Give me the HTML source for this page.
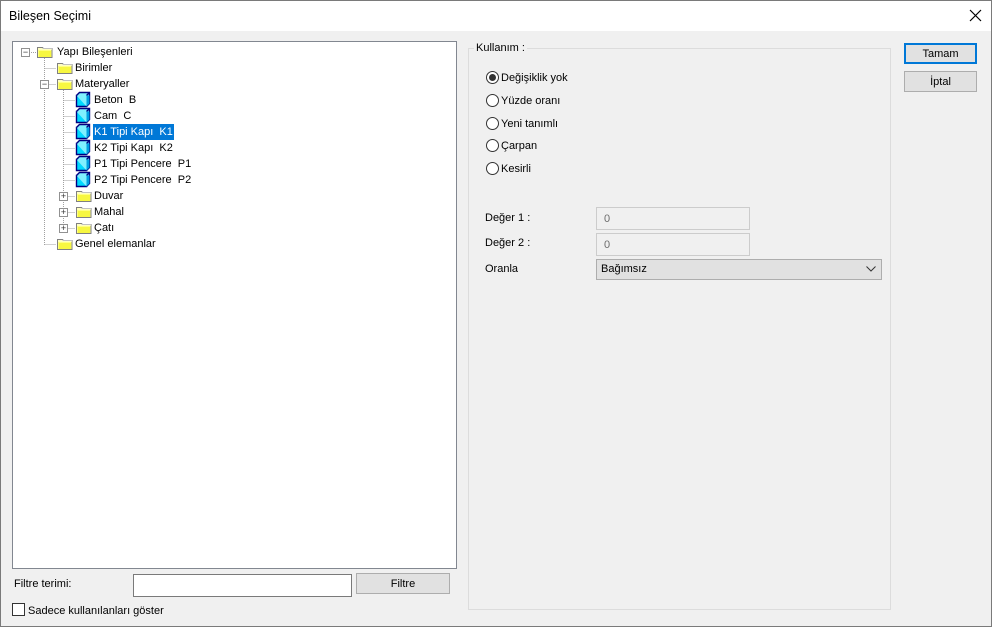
<!DOCTYPE html>
<html><head><meta charset="utf-8"><style>
*{margin:0;padding:0;box-sizing:border-box}
body{width:992px;height:627px;background:#f0f0f0;font-family:"Liberation Sans",sans-serif;font-size:11px;line-height:19px;color:#000;position:relative;overflow:hidden}
.a{position:absolute;white-space:nowrap}
#win{position:absolute;left:0;top:0;width:992px;height:627px;border:1px solid #7a7a7a}
#title{position:absolute;left:0;top:0;width:992px;height:31px;background:#fff}
.tree{position:absolute;left:12px;top:41px;width:445px;height:528px;background:#fff;border:1px solid #828790}
.tb{position:absolute;width:9px;height:9px;border:1px solid #919191;background:#fff;font-size:9px;line-height:7px;text-align:center;color:#333}
.btn{position:absolute;background:#e1e1e1;border:1px solid #adadad;text-align:center;line-height:21px}
.inp{position:absolute;background:#fff;border:1px solid #7a7a7a}
.rad{position:absolute;width:13px;height:13px;border:1px solid #333;border-radius:50%;background:#fff}
</style></head><body>
<div id="title"></div>
<div id="win"></div>
<div class="a" style="left:9px;top:8px;font-size:12.5px;line-height:16px">Bileşen Seçimi</div>
<svg class="a" style="left:969px;top:9px" width="13" height="13"><path d="M1 1L12 12M12 1L1 12" stroke="#000" stroke-width="1.2"/></svg>

<div class="tree">
<svg class="a" style="left:0;top:0" width="445" height="528">
<g stroke="#a0a0a0" stroke-dasharray="1 1" fill="none">
<path d="M31.5 16v187M31.5 26.5h12M31.5 42.5h12M31.5 202.5h12M50.5 48v139M50.5 58.5h12M50.5 74.5h12M50.5 90.5h12M50.5 106.5h12M50.5 122.5h12M50.5 138.5h12M50.5 154.5h12M50.5 170.5h12M50.5 186.5h12M18 10.5h6"/>
</g>
<defs>
<g id="f"><path d="M0.5 2.5h5l1 1h8.5v9h-14.5z" fill="#ffff80" stroke="#808080"/><path d="M1 4h14" stroke="#fff"/><path d="M2 6h12v6h-12z" fill="#f0f000" opacity=".5"/></g>
<g id="c"><path d="M1.5 3.5h10v11h-10z" fill="#00d8ff" stroke="#000080" stroke-width="1.4"/><path d="M1.5 3.5l3-3h10v11l-3 3M11.5 3.5l3-3" fill="#80f0ff" stroke="#000080" stroke-width="1.4"/><path d="M11.5 3.5h3v8l-3 3z" fill="#00a0e0"/></g>
</defs>
<use href="#f" x="24" y="3"/>
<use href="#f" x="44" y="19"/>
<use href="#f" x="44" y="35"/>
<use href="#c" x="62" y="50"/><use href="#c" x="62" y="66"/><use href="#c" x="62" y="82"/><use href="#c" x="62" y="98"/><use href="#c" x="62" y="114"/><use href="#c" x="62" y="130"/>
<use href="#f" x="63" y="147"/><use href="#f" x="63" y="163"/><use href="#f" x="63" y="179"/>
<use href="#f" x="44" y="195"/>
</svg>
<div class="tb" style="left:8px;top:6px">−</div>
<div class="tb" style="left:27px;top:38px">−</div>
<div class="tb" style="left:46px;top:150px">+</div>
<div class="tb" style="left:46px;top:166px">+</div>
<div class="tb" style="left:46px;top:182px">+</div>
<div class="a" style="left:44px;top:1px">Yapı Bileşenleri</div>
<div class="a" style="left:62px;top:17px">Birimler</div>
<div class="a" style="left:62px;top:33px">Materyaller</div>
<div class="a" style="left:81px;top:49px">Beton&nbsp; B</div>
<div class="a" style="left:81px;top:65px">Cam&nbsp; C</div>
<div class="a" style="left:80px;top:82px;background:#0078d7;color:#fff;padding:0 1px;height:16px;line-height:17px">K1 Tipi Kapı&nbsp; K1</div>
<div class="a" style="left:81px;top:97px">K2 Tipi Kapı&nbsp; K2</div>
<div class="a" style="left:81px;top:113px">P1 Tipi Pencere&nbsp; P1</div>
<div class="a" style="left:81px;top:129px">P2 Tipi Pencere&nbsp; P2</div>
<div class="a" style="left:81px;top:145px">Duvar</div>
<div class="a" style="left:81px;top:161px">Mahal</div>
<div class="a" style="left:81px;top:177px">Çatı</div>
<div class="a" style="left:62px;top:193px">Genel elemanlar</div>
</div>

<div class="a" style="left:14px;top:575px">Filtre terimi:</div>
<div class="inp" style="left:133px;top:574px;width:219px;height:23px"></div>
<div class="btn" style="left:356px;top:573px;width:94px;height:21px;line-height:20px">Filtre</div>
<div class="a" style="left:12px;top:603px;width:13px;height:13px;border:1px solid #333;background:#fff"></div>
<div class="a" style="left:28px;top:602px">Sadece kullanılanları göster</div>

<div class="a" style="left:468px;top:48px;width:423px;height:562px;border:1px solid #dcdcdc"></div>
<div class="a" style="left:474px;top:39px;background:#f0f0f0;padding:0 2px">Kullanım :</div>
<div class="rad" style="left:486px;top:71px"><div style="position:absolute;left:2px;top:2px;width:7px;height:7px;border-radius:50%;background:#333"></div></div>
<div class="rad" style="left:486px;top:94px"></div>
<div class="rad" style="left:486px;top:117px"></div>
<div class="rad" style="left:486px;top:139px"></div>
<div class="rad" style="left:486px;top:162px"></div>
<div class="a" style="left:501px;top:69px">Değişiklik yok</div>
<div class="a" style="left:501px;top:92px">Yüzde oranı</div>
<div class="a" style="left:501px;top:115px">Yeni tanımlı</div>
<div class="a" style="left:501px;top:137px">Çarpan</div>
<div class="a" style="left:501px;top:160px">Kesirli</div>
<div class="a" style="left:485px;top:209px">Değer 1 :</div>
<div class="a" style="left:485px;top:234px">Değer 2 :</div>
<div class="a" style="left:485px;top:260px">Oranla</div>
<div class="a" style="left:596px;top:207px;width:154px;height:23px;border:1px solid #ccc;padding:2px 0 0 7px;color:#6d6d6d">0</div>
<div class="a" style="left:596px;top:233px;width:154px;height:23px;border:1px solid #ccc;padding:2px 0 0 7px;color:#6d6d6d">0</div>
<div class="a" style="left:596px;top:259px;width:286px;height:21px;border:1px solid #adadad;background:#e1e1e1;padding:0 0 0 4px">Bağımsız</div>
<svg class="a" style="left:866px;top:266px" width="10" height="6"><path d="M0.5 0.5l4.5 4.5 4.5-4.5" stroke="#333" fill="none"/></svg>

<div class="btn" style="left:904px;top:43px;width:73px;height:21px;border:2px solid #0078d7;line-height:18px">Tamam</div>
<div class="btn" style="left:904px;top:71px;width:73px;height:21px;line-height:20px">İptal</div>
</body></html>
